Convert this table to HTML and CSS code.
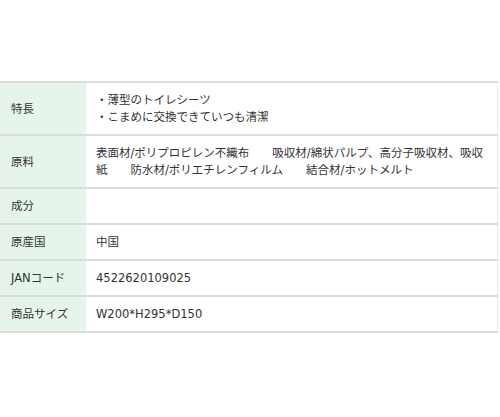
FILE: index.html
```html
<!DOCTYPE html>
<html lang="ja">
<head>
<meta charset="utf-8">
<link rel="stylesheet" href="styles.css">
</head>
<body>
<table class="spec">
  <tr>
    <th>特長</th>
    <td>・薄型のトイレシーツ<br>・こまめに交換できていつも清潔</td>
  </tr>
  <tr>
    <th>原料</th>
    <td>表面材/ポリプロピレン不織布　　吸収材/綿状パルプ、高分子吸収材、吸収紙　　防水材/ポリエチレンフィルム　　結合材/ホットメルト</td>
  </tr>
  <tr>
    <th>成分</th>
    <td></td>
  </tr>
  <tr>
    <th>原産国</th>
    <td>中国</td>
  </tr>
  <tr>
    <th>JANコード</th>
    <td>4522620109025</td>
  </tr>
  <tr>
    <th>商品サイズ</th>
    <td>W200*H295*D150</td>
  </tr>
</table>
</body>
</html>
```

FILE: styles.css
```css
html, body {
  margin: 0;
  padding: 0;
  background: #fff;
}

.spec {
  margin-top: 81px;
  width: 498px;
  border-collapse: collapse;
  font-family: "DejaVu Sans", "Noto Sans CJK JP", sans-serif;
  font-size: 11.5px;
  line-height: 17px;
  color: #333;
  border-top: 2px solid #dcdcdc;
  border-left: 1px solid #ececec;
  border-right: 1px solid #ececec;
}

.spec tr {
  border-bottom: 2px solid #dcdcdc;
}

.spec th,
.spec td {
  height: 17px;
  padding: 9px 0 8px 10px;
  vertical-align: middle;
  text-align: left;
  font-weight: normal;
}

.spec th {
  width: 75px;
  padding-left: 10px;
  background: #e5f5ea;
  white-space: nowrap;
}

.spec td {
  background: #fff;
  padding-right: 8px;
  letter-spacing: 0;
}
```
